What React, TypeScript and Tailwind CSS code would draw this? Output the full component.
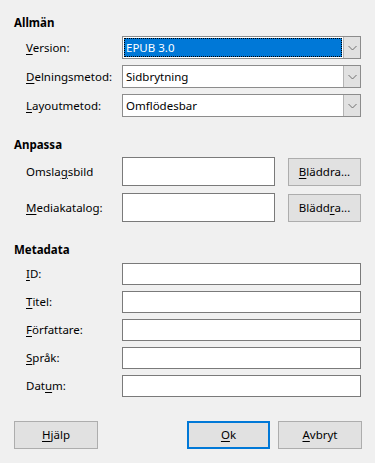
import React from "react";

const U = ({ children }: { children: React.ReactNode }) => <span className="underline underline-offset-2">{children}</span>;

function Chevron() {
  return (
    <svg width="9" height="6" viewBox="0 0 9 6" className="block">
      <path d="M0.5 1 L4.5 5 L8.5 1" fill="none" stroke="#707070" strokeWidth="1" />
    </svg>
  );
}

function Combo({ value, selected }: { value: string; selected?: boolean }) {
  return (
    <div className="flex h-[23px] w-[239px] border border-[#8c8c8c] bg-white">
      <div className="flex flex-1 items-center p-px">
        {selected ? (
          <div className="flex h-full w-full items-center border border-dotted border-black bg-[#0078d7] pl-[1px] text-white">
            {value}
          </div>
        ) : (
          <div className="pl-[2px]">{value}</div>
        )}
      </div>
      <div className="flex w-[17px] items-center justify-center border-l border-[#b4b4b4] bg-[#e1e1e1]">
        <Chevron />
      </div>
    </div>
  );
}

function Btn({ children, w, focus }: { children: React.ReactNode; w: string; focus?: boolean }) {
  return (
    <div
      className={
        "flex h-[28px] items-center justify-center bg-[#e1e1e1] " +
        w +
        (focus ? " border-2 border-[#0078d7]" : " border border-[#adadad]")
      }
    >
      {children}
    </div>
  );
}

function Row({ label, children, h }: { label: React.ReactNode; children: React.ReactNode; h: string }) {
  return (
    <div className={"flex items-center " + h}>
      <div className="w-[96px] shrink-0">{label}</div>
      {children}
    </div>
  );
}

const Input = ({ w, h }: { w: string; h: string }) => <div className={"border border-[#7a7a7a] bg-white " + w + " " + h} />;

export default function App() {
  return (
    <div
      className="h-[463px] w-[375px] bg-[#f0f0f0] pl-[14px] pt-[15px] text-[11.5px] leading-[16px] text-black"
      style={{ fontFamily: '"Noto Sans", "Open Sans", sans-serif' }}
    >
      <div className="font-bold">Allmän</div>
      <div className="mt-[5px] flex flex-col gap-[6px] pl-[12px]">
        <Row h="h-[23px]" label={<><U>V</U>ersion:</>}>
          <Combo value="EPUB 3.0" selected />
        </Row>
        <Row h="h-[23px]" label={<><U>D</U>elningsmetod:</>}>
          <Combo value="Sidbrytning" />
        </Row>
        <Row h="h-[23px]" label={<><U>L</U>ayoutmetod:</>}>
          <Combo value="Omflödesbar" />
        </Row>
      </div>

      <div className="mt-[20px] font-bold">Anpassa</div>
      <div className="mt-[4px] flex flex-col gap-[7px] pl-[12px]">
        <Row h="h-[29px]" label={<>Omsla<U>g</U>sbild</>}>
          <Input w="w-[153px]" h="h-[29px]" />
          <div className="ml-[13px]">
            <Btn w="w-[73px]"><U>B</U>läddra...</Btn>
          </div>
        </Row>
        <Row h="h-[29px]" label={<><U>M</U>ediakatalog:</>}>
          <Input w="w-[153px]" h="h-[29px]" />
          <div className="ml-[13px]">
            <Btn w="w-[73px]">Blädd<U>r</U>a...</Btn>
          </div>
        </Row>
      </div>

      <div className="mt-[20px] font-bold">Metadata</div>
      <div className="mt-[5px] flex flex-col gap-[6px] pl-[12px]">
        <Row h="h-[22px]" label={<><U>I</U>D:</>}><Input w="w-[239px]" h="h-[22px]" /></Row>
        <Row h="h-[22px]" label={<><U>T</U>itel:</>}><Input w="w-[239px]" h="h-[22px]" /></Row>
        <Row h="h-[22px]" label={<><U>F</U>örfattare:</>}><Input w="w-[239px]" h="h-[22px]" /></Row>
        <Row h="h-[22px]" label={<><U>S</U>pråk:</>}><Input w="w-[239px]" h="h-[22px]" /></Row>
        <Row h="h-[22px]" label={<>Dat<U>u</U>m:</>}><Input w="w-[239px]" h="h-[22px]" /></Row>
      </div>

      <div className="mt-[24px] flex">
        <Btn w="w-[84px]"><U>H</U>jälp</Btn>
        <div className="ml-[89px]">
          <Btn w="w-[83px]" focus><U>O</U>k</Btn>
        </div>
        <div className="ml-[8px]">
          <Btn w="w-[84px]"><U>A</U>vbryt</Btn>
        </div>
      </div>
    </div>
  );
}
